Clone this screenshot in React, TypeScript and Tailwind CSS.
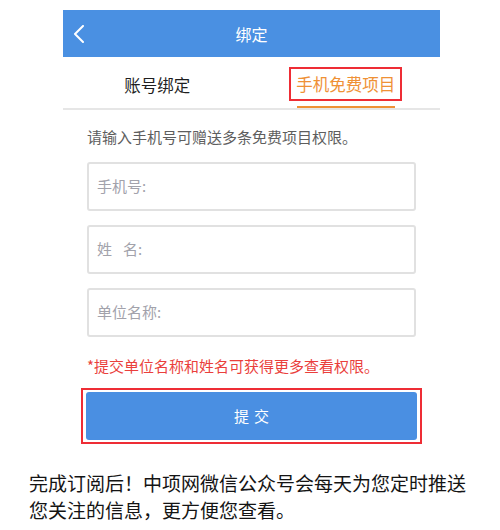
import React from 'react';

const FONT = { fontFamily: '"Noto Sans CJK SC", "Noto Sans", sans-serif' };

function Field({ children }: { children: React.ReactNode }) {
  return (
    <div className="h-[49px] border-2 border-[#e1e1e1] rounded-[3px] flex items-center pl-[8px] text-[15px] text-[#a2a2ab]">
      {children}
    </div>
  );
}

export default function App() {
  return (
    <div className="w-[500px] h-[530px] bg-white pt-[10px]" style={FONT}>
      <div className="ml-[63px] w-[377px]">
        {/* Header */}
        <div className="h-[47px] bg-[#4a90e2] flex items-center relative">
          <svg className="ml-[9px]" width="14" height="18" viewBox="0 0 14 18" fill="none">
            <polyline points="11,1 3,9 11,17" stroke="#fff" strokeWidth="2" strokeLinecap="round" strokeLinejoin="round" />
          </svg>
          <p className="absolute inset-0 flex items-center justify-center text-[16px] text-white">绑定</p>
        </div>

        {/* Tabs */}
        <div className="h-[53px] flex border-b-2 border-[#e6e6e6]">
          <div className="flex-1 flex items-start justify-center pt-[12px]">
            <span className="text-[16.5px] leading-[32px] text-[#1f1f1f]">账号绑定</span>
          </div>
          <div className="flex-1 flex flex-col items-center pt-[10px]">
            <div className="h-[36px] px-[5px] border-2 border-[#ee2d35] flex items-center">
              <span className="text-[16.5px] text-[#ef9136]">手机免费项目</span>
            </div>
            <div className="mt-[5px] w-[98px] h-[2px] bg-[#ef9136]" />
          </div>
        </div>

        {/* Form */}
        <div className="px-6">
          <p className="pt-[17px] text-[15px] leading-[20px] text-[#5e5e5e]">请输入手机号可赠送多条免费项目权限。</p>
          <div className="mt-[15px] flex flex-col gap-[14px]">
            <Field>手机号:</Field>
            <Field>
              <span className="mr-[11px]">姓</span>名:
            </Field>
            <Field>单位名称:</Field>
          </div>
          <p className="mt-[19px] text-[15px] leading-[20px] text-[#ea3f3c]">*提交单位名称和姓名可获得更多查看权限。</p>
          <div className="mt-[12px] -mx-[6px] border-2 border-[#ee2d35] px-[3px] py-[2px]">
            <button className="w-full h-[48px] bg-[#4a8fe2] rounded-[3px] text-white text-[15px] flex items-center justify-center">
              <span>提</span>
              <span className="ml-[5px]">交</span>
            </button>
          </div>
        </div>
      </div>

      {/* Footer note */}
      <p className="mt-[25px] pl-[29px] text-[19px] leading-[27px] text-[#141414]">
        完成订阅后！中项网微信公众号会每天为您定时推送
        <br />
        您关注的信息，更方便您查看。
      </p>
    </div>
  );
}
